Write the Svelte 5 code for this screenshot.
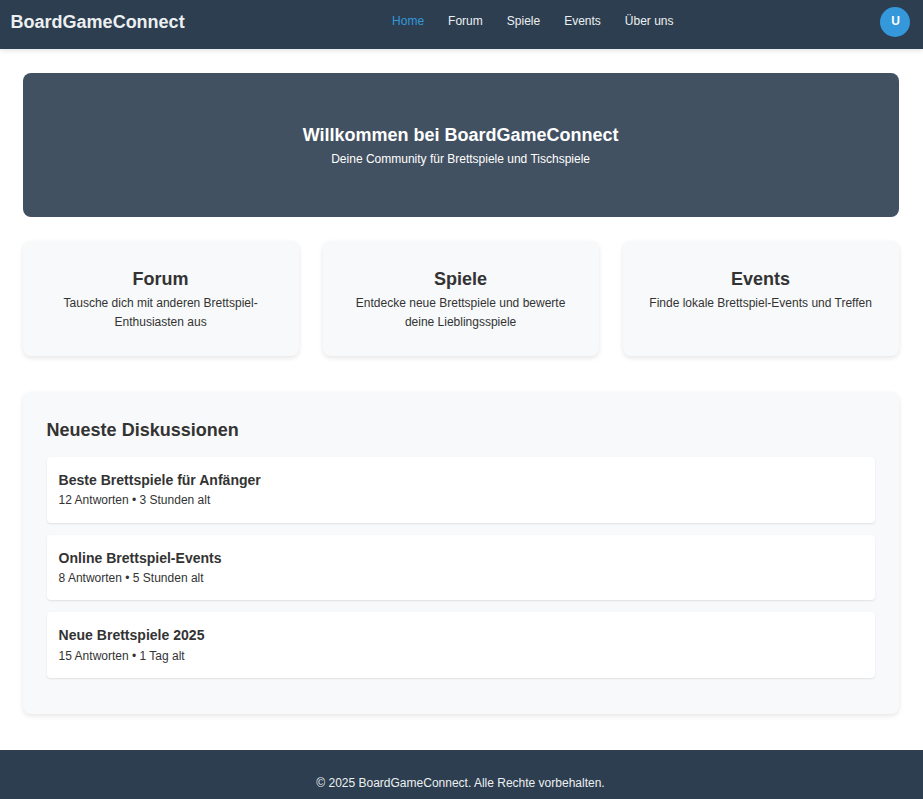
<script>
  const links = ['Home', 'Forum', 'Spiele', 'Events', 'Über uns'];
  const features = [
    { title: 'Forum', text: 'Tausche dich mit anderen Brettspiel-Enthusiasten aus' },
    { title: 'Spiele', text: 'Entdecke neue Brettspiele und bewerte deine Lieblingsspiele' },
    { title: 'Events', text: 'Finde lokale Brettspiel-Events und Treffen' }
  ];
  const discussions = [
    { title: 'Beste Brettspiele für Anfänger', meta: '12 Antworten • 3 Stunden alt' },
    { title: 'Online Brettspiel-Events', meta: '8 Antworten • 5 Stunden alt' },
    { title: 'Neue Brettspiele 2025', meta: '15 Antworten • 1 Tag alt' }
  ];
  let active = $state('Home');
</script>

<div class="page">
  <header>
    <div class="logo">BoardGameConnect</div>
    <nav>
      {#each links as link}
        <a href="#top" class:active={active === link} onclick={() => (active = link)}>{link}</a>
      {/each}
    </nav>
    <div class="avatar">U</div>
  </header>

  <main>
    <section class="hero">
      <h2>Willkommen bei BoardGameConnect</h2>
      <p>Deine Community für Brettspiele und Tischspiele</p>
    </section>

    <section class="features">
      {#each features as feature}
        <article class="card">
          <h2>{feature.title}</h2>
          <p>{feature.text}</p>
        </article>
      {/each}
    </section>

    <section class="discussions">
      <h2>Neueste Diskussionen</h2>
      {#each discussions as item}
        <article class="item">
          <h3>{item.title}</h3>
          <p>{item.meta}</p>
        </article>
      {/each}
    </section>
  </main>

  <footer><p>© 2025 BoardGameConnect. Alle Rechte vorbehalten.</p></footer>
</div>

<style>
  :global(body) {
    margin: 0;
    background: #fff;
  }
  .page {
    height: 799px;
    overflow: hidden;
    font: 12px/1.6 'Liberation Sans', Arial, sans-serif;
    color: #333;
  }
  h2, h3, p {
    margin: 0;
  }
  h2 {
    font-size: 18px;
  }
  h3 {
    font-size: 14.04px;
  }
  header {
    display: flex;
    justify-content: space-between;
    align-items: center;
    box-sizing: border-box;
    height: 49px;
    padding: 0 13px 5px 10.6px;
    background: #2c3e50;
    color: #fff;
    box-shadow: 0 2px 4px rgba(0, 0, 0, 0.1);
  }
  .logo {
    font-size: 18px;
    font-weight: bold;
    color: #ecf0f1;
  }
  nav {
    display: flex;
    gap: 24px;
    padding-left: 1px;
  }
  a {
    color: #ecf0f1;
    text-decoration: none;
  }
  a.active {
    color: #3498db;
  }
  .avatar {
    display: flex;
    align-items: center;
    justify-content: center;
    box-sizing: border-box;
    width: 30px;
    height: 30px;
    padding: 0 0 1px 1px;
    border-radius: 50%;
    background: #3498db;
    font-weight: bold;
  }
  main {
    padding: 24px 24.4px 0 22.6px;
  }
  .hero {
    padding: 48px;
    border-radius: 8px;
    background: #425161;
    color: #fff;
    text-align: center;
  }
  .features {
    display: grid;
    grid-template-columns: repeat(3, 1fr);
    gap: 24px;
    margin: 24px 0 36px;
  }
  .card {
    padding: 24px;
    text-align: center;
  }
  .card, .discussions {
    border-radius: 8px;
    background: #f8f9fa;
    box-shadow: 0 2px 5px rgba(0, 0, 0, 0.1);
  }
  .discussions {
    padding: 24px;
  }
  .discussions h2 {
    margin-bottom: 12px;
  }
  .item {
    margin-bottom: 12px;
    padding: 12px;
    border-radius: 4px;
    background: #fff;
    box-shadow: 0 1px 2px rgba(0, 0, 0, 0.1);
  }
  footer {
    margin-top: 36px;
    padding: 24px 26px 24px 24px;
    background: #2c3e50;
    color: #ecf0f1;
    text-align: center;
  }
</style>
